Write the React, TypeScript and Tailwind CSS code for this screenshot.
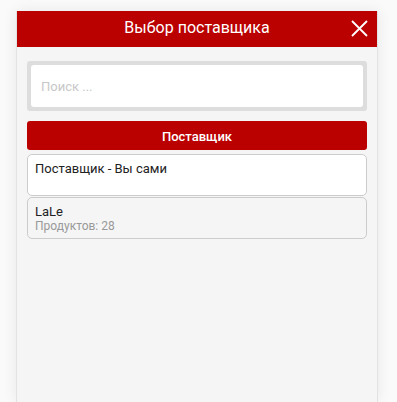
export default function App() {
  const suppliers = [
    { id: 1, name: "Поставщик - Вы сами", white: true },
    { id: 2, name: "LaLe", count: 28 },
  ];

  return (
    <div
      className="min-h-[402px] bg-[#fafafa] pt-[11px] pl-4"
      style={{ fontFamily: "Roboto, Arial, sans-serif" }}
    >
      <div className="w-[362px] h-[391px] bg-[#f5f5f5] border-x border-[#e2e2e2] shadow-[0_0_14px_rgba(0,0,0,0.08)]">
        <div className="relative h-9 pb-[3px] bg-[#bb0000] flex items-center justify-center text-white text-base">
          Выбор поставщика
          <button className="absolute right-[9px] top-[9px] w-[17px] h-[17px]">
            <svg viewBox="0 0 17 17" width="17" height="17">
              <path d="M1 1L16 16M16 1L1 16" stroke="white" strokeWidth="1.8" />
            </svg>
          </button>
        </div>

        <div className="px-[10px] pt-[14px]">
          <div className="bg-[#dddddd] rounded-[3px] p-1">
            <input
              className="w-full h-[42px] bg-white rounded-[3px] px-[10px] text-[13px] outline-none placeholder:text-[#c8c8c8]"
              placeholder="Поиск ..."
            />
          </div>

          <div className="mt-[10px] h-[29px] pt-[3px] bg-[#bb0000] rounded-[3px] flex items-center justify-center text-white text-[13px] font-medium">
            Поставщик
          </div>

          <ul className="mt-1 flex flex-col gap-px">
            {suppliers.map((s) => (
              <li
                key={s.id}
                className={`h-[42px] border border-[#cccccc] rounded-[5px] px-[7px] pt-[5px] ${
                  s.white ? "bg-white" : "bg-[#f5f5f5]"
                }`}
              >
                <div className="text-[13px] text-[#222] leading-[17px]">{s.name}</div>
                {s.count !== undefined && (
                  <div className="text-xs text-[#999] leading-[13px]">
                    Продуктов: {s.count}
                  </div>
                )}
              </li>
            ))}
          </ul>
        </div>
      </div>
    </div>
  );
}
